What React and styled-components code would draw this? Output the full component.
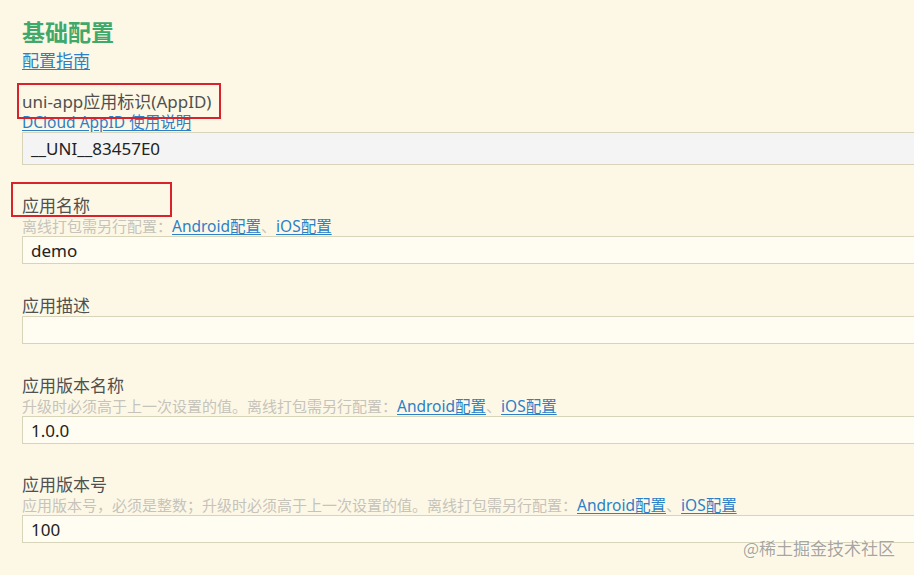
import React from 'react';
import styled, { createGlobalStyle } from 'styled-components';

const GlobalStyle = createGlobalStyle`
  html, body {
    margin: 0;
    padding: 0;
    background: #fdf8e6;
    overflow: hidden;
  }
  body {
    font-family: "Noto Sans", "Noto Sans CJK SC", sans-serif;
  }
`;

const Page = styled.div`
  position: relative;
  width: 914px;
  height: 575px;
  overflow: hidden;
  background: #fdf8e6;
  padding: 16px 0 0 22px;
  box-sizing: border-box;
`;

const Title = styled.h1`
  margin: 0;
  font-family: "Noto Sans CJK SC", sans-serif;
  font-size: 23px;
  line-height: 30px;
  font-weight: 700;
  color: #3fa86a;
`;

const Link = styled.a`
  color: #2b80c8;
  text-decoration: underline;
  text-underline-offset: 2px;
  font-size: ${p => (p.small ? '15.5px' : '17px')};
  cursor: pointer;
`;

const GuideLine = styled.div`
  line-height: 20px;
  margin-top: 5px;
`;

const Field = styled.section`
  margin-top: ${p => p.gap}px;
`;

const Label = styled.div`
  font-size: 17px;
  line-height: 20px;
  color: #505050;
`;

const Marked = styled.span`
  position: relative;
  display: inline-block;

  &::after {
    content: '';
    position: absolute;
    left: ${p => p.box[0]}px;
    top: ${p => p.box[1]}px;
    width: ${p => p.box[2]}px;
    height: ${p => p.box[3]}px;
    border: 2px solid #d9232c;
    box-sizing: border-box;
    pointer-events: none;
  }
`;

const Hint = styled.div`
  font-size: 15px;
  line-height: 20px;
  color: #c6c3bb;
  white-space: nowrap;
`;

const Input = styled.div`
  width: 930px;
  height: ${p => (p.tall ? 33 : 28)}px;
  box-sizing: border-box;
  border: 1px solid #d8d4ba;
  background: ${p => (p.disabled ? '#f4f4f4' : '#fffcf1')};
  padding-left: 8px;
  display: flex;
  align-items: center;
  font-size: 17px;
  color: #222;
`;

const Watermark = styled.div`
  position: absolute;
  right: 19px;
  top: 537px;
  font-family: "Noto Sans CJK SC", sans-serif;
  font-size: 17px;
  line-height: 22px;
  color: rgba(90, 90, 90, 0.55);
  text-shadow: 0 0 2px rgba(255, 255, 255, 0.8);
`;

const PlatformLinks = () => (
  <>
    <Link small>Android配置</Link>、<Link small>iOS配置</Link>
  </>
);

const fields = [
  {
    label: 'uni-app应用标识(AppID)',
    box: [-5, -9, 204, 36],
    link: 'DCloud AppID 使用说明',
    value: '__UNI__83457E0',
    disabled: true,
    gap: 21,
  },
  {
    label: '应用名称',
    box: [-11, -14, 161, 35],
    hint: '离线打包需另行配置：',
    value: 'demo',
    gap: 31,
  },
  { label: '应用描述', value: '', gap: 32 },
  {
    label: '应用版本名称',
    hint: '升级时必须高于上一次设置的值。离线打包需另行配置：',
    value: '1.0.0',
    gap: 32,
  },
  {
    label: '应用版本号',
    hint: '应用版本号，必须是整数；升级时必须高于上一次设置的值。离线打包需另行配置：',
    value: '100',
    gap: 31,
  },
];

export default function App() {
  return (
    <Page>
      <GlobalStyle />
      <Title>基础配置</Title>
      <GuideLine>
        <Link>配置指南</Link>
      </GuideLine>
      {fields.map(f => (
        <Field key={f.label} gap={f.gap}>
          <Label>
            {f.box ? <Marked box={f.box}>{f.label}</Marked> : f.label}
          </Label>
          {f.link && (
            <Hint>
              <Link small>{f.link}</Link>
            </Hint>
          )}
          {f.hint && (
            <Hint>
              {f.hint}
              <PlatformLinks />
            </Hint>
          )}
          <Input tall={f.disabled} disabled={f.disabled}>
            {f.value}
          </Input>
        </Field>
      ))}
      <Watermark>@稀土掘金技术社区</Watermark>
    </Page>
  );
}
